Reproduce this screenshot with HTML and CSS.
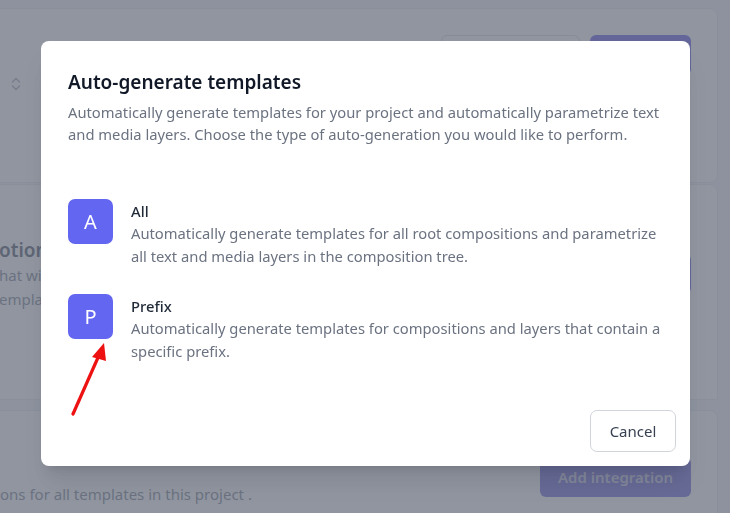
FILE: index.html
```html
<!DOCTYPE html>
<html lang="en">
<head>
<meta charset="utf-8">
<title>Auto-generate templates</title>
<link rel="stylesheet" href="styles.css">
</head>
<body>
<div class="page">
  <section class="card card-top">
    <div class="select-icon">
      <svg width="12" height="16" viewBox="0 0 12 16" fill="none" stroke="#9ca3af" stroke-width="1.5" stroke-linecap="round" stroke-linejoin="round"><path d="M2.5 6 6 2.5 9.5 6"/><path d="M2.5 10 6 13.5 9.5 10"/></svg>
    </div>
    <div class="top-actions">
      <button class="btn-outline">Export</button>
      <button class="btn-primary">Save</button>
    </div>
  </section>
  <section class="card card-mid">
    <div class="mid-text">
      <h3 class="mid-title">otion</h3>
      <p class="mid-desc">hat wi<br>emplat</p>
    </div>
    <button class="btn-primary mid-btn">Edit</button>
  </section>
  <section class="card card-bottom">
    <div class="bottom-row">
      <button class="btn-primary btn-disabled">Add integration</button>
    </div>
    <p class="bottom-text">ons for all templates in this project .</p>
  </section>
</div>

<div class="overlay">
  <div class="modal">
    <h2 class="modal-title">Auto-generate templates</h2>
    <p class="modal-desc">Automatically generate templates for your project and automatically parametrize text<br>and media layers. Choose the type of auto-generation you would like to perform.</p>
    <ul class="options">
      <li class="option">
        <span class="badge">A</span>
        <div class="option-text">
          <div class="option-title">All</div>
          <div class="option-desc">Automatically generate templates for all root compositions and parametrize<br>all text and media layers in the composition tree.</div>
        </div>
      </li>
      <li class="option">
        <span class="badge">P</span>
        <div class="option-text">
          <div class="option-title">Prefix</div>
          <div class="option-desc">Automatically generate templates for compositions and layers that contain a<br>specific prefix.</div>
        </div>
      </li>
    </ul>
    <div class="modal-footer">
      <button class="btn-cancel">Cancel</button>
    </div>
  </div>
  <svg class="arrow" width="46" height="82" viewBox="0 0 46 82">
    <path d="M4 75 L31 14" stroke="#ee1111" stroke-width="3.2" stroke-linecap="round"/>
    <path d="M35 4 L23 18 L37 22 Z" fill="#ee1111"/>
  </svg>
</div>
</body>
</html>
```

FILE: styles.css
```css
* { box-sizing: border-box; }

html, body {
  margin: 0;
  padding: 0;
  width: 730px;
  height: 513px;
  overflow: hidden;
}

body {
  background: #f3f4f6;
  font-family: "Noto Sans", "Open Sans", sans-serif;
  color: #111827;
}

.page {
  display: flex;
  flex-direction: column;
  padding-top: 8px;
  width: 730px;
}

.card {
  background: #ffffff;
  border: 1px solid #e5e7eb;
  margin-left: -20px;
  margin-right: 12px;
}

.card-top {
  height: 175px;
  border-radius: 8px;
  display: flex;
  align-items: flex-start;
  justify-content: space-between;
  padding: 26px 26px 0 29px;
}

.select-icon {
  margin-top: 41px;
  display: flex;
}

.top-actions {
  display: flex;
  gap: 10px;
}

.btn-outline {
  width: 139px;
  height: 40px;
  border: 1px solid #d1d5db;
  background: #fff;
  border-radius: 6px;
  font: inherit;
  font-size: 15px;
  color: #374151;
}

.btn-primary {
  height: 40px;
  border: none;
  background: #4f46e5;
  color: #fff;
  border-radius: 6px;
  font: inherit;
  font-size: 15px;
  font-weight: 600;
  padding: 0 20px;
  white-space: nowrap;
}

.card-top .btn-primary { width: 101px; }

.card-mid {
  margin-top: 1px;
  height: 216px;
  border-radius: 0 8px 0 0;
  display: flex;
  justify-content: space-between;
  align-items: flex-start;
  padding: 52px 26px 0 18px;
}

.mid-text {
  white-space: nowrap;
}

.mid-title {
  margin: 0;
  font-size: 19px;
  font-weight: 600;
  color: #374151;
  line-height: 26px;
}

.mid-desc {
  margin: 0;
  font-size: 15px;
  color: #6b7280;
  line-height: 24px;
}

.mid-btn { margin-top: 17px; width: 101px; }

.card-bottom {
  margin-top: 10px;
  height: 120px;
  border-radius: 8px;
  padding: 46px 26px 0 19px;
}

.bottom-row {
  display: flex;
  justify-content: flex-end;
}

.btn-disabled {
  width: 151px;
  padding: 0;
  background: #5b54d6;
  color: #c7c9e6;
  font-size: 15px;
}

.bottom-text {
  margin: -14px 0 0 0;
  font-size: 15px;
  color: #6b7280;
  line-height: 22px;
}

.overlay {
  position: fixed;
  inset: 0;
  background: rgba(107, 114, 128, 0.75);
  padding: 41px 40px 47px 41px;
}

.modal {
  width: 649px;
  height: 425px;
  background: #ffffff;
  border-radius: 8px;
  padding: 27px 14px 14px 27px;
  display: flex;
  flex-direction: column;
  box-shadow: 0 20px 25px -5px rgba(0,0,0,0.1), 0 8px 10px -6px rgba(0,0,0,0.1);
}

.modal-title {
  margin: 0;
  font-size: 19px;
  line-height: 28px;
  font-weight: 600;
  color: #111827;
}

.modal-desc {
  margin: 5px 0 0 0;
  font-size: 14.75px;
  line-height: 22px;
  color: #6b7280;
}

.options {
  list-style: none;
  margin: 54px 0 0 0;
  padding: 0;
  display: flex;
  flex-direction: column;
  gap: 27px;
}

.option {
  display: flex;
  gap: 18px;
  align-items: flex-start;
}

.badge {
  width: 45px;
  height: 45px;
  flex: none;
  border-radius: 7px;
  background: #6366f1;
  color: #ffffff;
  font-size: 20px;
  display: flex;
  align-items: center;
  justify-content: center;
}

.option-text { padding-top: 1px; }

.option-title {
  font-size: 14.75px;
  line-height: 22px;
  font-weight: 500;
  color: #1f2937;
}

.option-desc {
  font-size: 14.75px;
  line-height: 22.5px;
  color: #6b7280;
}

.modal-footer {
  margin-top: auto;
  display: flex;
  justify-content: flex-end;
}

.btn-cancel {
  width: 86px;
  height: 42px;
  border: 1px solid #d1d5db;
  background: #ffffff;
  border-radius: 7px;
  font: inherit;
  font-size: 15px;
  color: #374151;
}

.arrow {
  position: absolute;
  left: 69px;
  top: 339px;
}
```
